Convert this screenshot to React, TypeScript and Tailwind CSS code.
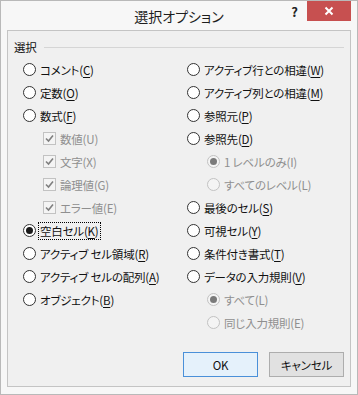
import React from 'react'

type Row = {
  label: string
  hotkey?: string
  kind?: 'radio' | 'check'
  indent?: boolean
  disabled?: boolean
  checked?: boolean
  focus?: boolean
} | null

const leftRows: Row[] = [
  { label: 'コメント', hotkey: 'C' },
  { label: '定数', hotkey: 'O' },
  { label: '数式', hotkey: 'F' },
  { label: '数値(U)', kind: 'check', indent: true, disabled: true, checked: true },
  { label: '文字(X)', kind: 'check', indent: true, disabled: true, checked: true },
  { label: '論理値(G)', kind: 'check', indent: true, disabled: true, checked: true },
  { label: 'エラー値(E)', kind: 'check', indent: true, disabled: true, checked: true },
  { label: '空白セル', hotkey: 'K', checked: true, focus: true },
  { label: 'アクティブ セル領域', hotkey: 'R' },
  { label: 'アクティブ セルの配列', hotkey: 'A' },
  { label: 'オブジェクト', hotkey: 'B' },
  null,
]

const rightRows: Row[] = [
  { label: 'アクティブ行との相違', hotkey: 'W' },
  { label: 'アクティブ列との相違', hotkey: 'M' },
  { label: '参照元', hotkey: 'P' },
  { label: '参照先', hotkey: 'D' },
  { label: '1 レベルのみ(I)', indent: true, disabled: true, checked: true },
  { label: 'すべてのレベル(L)', indent: true, disabled: true },
  { label: '最後のセル', hotkey: 'S' },
  { label: '可視セル', hotkey: 'Y' },
  { label: '条件付き書式', hotkey: 'T' },
  { label: 'データの入力規則', hotkey: 'V' },
  { label: 'すべて(L)', indent: true, disabled: true, checked: true },
  { label: '同じ入力規則(E)', indent: true, disabled: true },
]

function Radio({ checked, disabled }: { checked?: boolean; disabled?: boolean }) {
  return (
    <span
      className={`w-[13px] h-[13px] shrink-0 rounded-full border flex items-center justify-center ${
        disabled ? 'border-[#c2c2c2] bg-[#f4f4f4]' : 'border-[#333333] bg-white'
      }`}
    >
      {checked && (
        <span className={`w-[7px] h-[7px] rounded-full ${disabled ? 'bg-[#7a7a7a]' : 'bg-[#1a1a1a]'}`} />
      )}
    </span>
  )
}

function Check() {
  return (
    <span className="w-[13px] h-[13px] shrink-0 border border-[#c2c2c2] bg-[#f4f4f4] flex items-center justify-center">
      <svg width="9" height="9" viewBox="0 0 9 9">
        <path d="M1 4.5 L3.5 7 L8 1.5" fill="none" stroke="#7f7f7f" strokeWidth="1.6" />
      </svg>
    </span>
  )
}

function Option({ row }: { row: Row }) {
  if (!row) return <div className="h-[23px]" />
  const text = row.hotkey ? (
    <>
      {row.label}(<span className="underline underline-offset-[2px]">{row.hotkey}</span>)
    </>
  ) : (
    row.label
  )
  return (
    <div className={`h-[23px] flex items-center ${row.indent ? 'pl-[20px]' : ''}`}>
      {row.kind === 'check' ? <Check /> : <Radio checked={row.checked} disabled={row.disabled} />}
      {row.focus ? (
        <span className="ml-[2px] px-[1px] leading-[16px] border border-dotted border-black">{text}</span>
      ) : (
        <span className={`ml-[4px] leading-[16px] ${row.disabled ? 'text-[#8f8f8f]' : ''}`}>{text}</span>
      )}
    </div>
  )
}

export default function App() {
  return (
    <div
      className="w-[358px] h-[395px] bg-[#f7f7f7] border border-[#b9b9b9] flex flex-col text-[#111] [font-feature-settings:'palt']"
      style={{ fontFamily: '"Noto Sans CJK JP", "Noto Sans", sans-serif' }}
    >
      {/* Title bar */}
      <div className="h-[29px] grid grid-cols-[1fr_auto_1fr] items-start">
        <div />
        <div className="pt-[5px] text-[14px] leading-[20px] text-[#1e1e1e]">選択オプション</div>
        <div className="flex justify-end items-start">
          <span className="mt-[3px] mr-[9px] text-[13px] font-bold leading-[16px] text-[#222]">?</span>
          <button className="w-[44px] h-[20px] mr-[6px] bg-[#c75050] flex items-center justify-center">
            <svg width="10" height="10" viewBox="0 0 10 10">
              <path d="M1.5 1.5 L8.5 8.5 M8.5 1.5 L1.5 8.5" stroke="white" strokeWidth="2" />
            </svg>
          </button>
        </div>
      </div>

      {/* Panel */}
      <div className="mx-[6px] mb-[7px] flex-1 bg-[#f0f0f0] border border-[#c4c4c4] flex flex-col text-[11.5px] tracking-[-0.2px]">
        <div className="flex items-center pt-[8px] pl-[6px] pr-[6px]">
          <span className="leading-[16px]">選択</span>
          <span className="ml-[7px] flex-1 h-px bg-[#d5d5d5]" />
        </div>

        <div className="mt-[3px] grid grid-cols-[164px_1fr] pl-[15px]">
          <div className="flex flex-col">
            {leftRows.map((r, i) => (
              <Option key={i} row={r} />
            ))}
          </div>
          <div className="flex flex-col">
            {rightRows.map((r, i) => (
              <Option key={i} row={r} />
            ))}
          </div>
        </div>

        <div className="mt-auto mb-[9px] mr-[6px] flex justify-end gap-[11px]">
          <button className="w-[75px] h-[25px] bg-[#e5f1fb] border border-[#4a90d9] leading-[16px]">OK</button>
          <button className="w-[75px] h-[25px] bg-[#e1e1e1] border border-[#adadad] leading-[16px]">キャンセル</button>
        </div>
      </div>
    </div>
  )
}
